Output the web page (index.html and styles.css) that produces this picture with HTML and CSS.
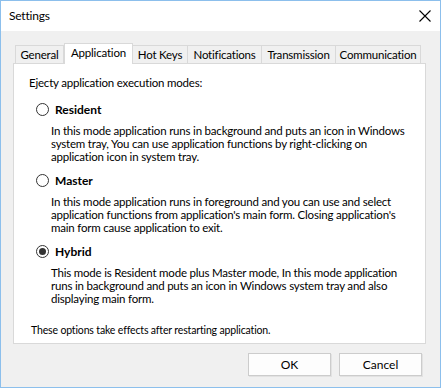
FILE: index.html
```html
<!DOCTYPE html>
<html lang="en">
  <head>
    <meta charset="UTF-8" />
    <meta name="viewport" content="width=device-width, initial-scale=1.0" />
    <title>Settings</title>
    <link rel="stylesheet" href="styles.css">
  </head>
  <body>
    <div class="window">
      <div class="titlebar">
        <span class="title">Settings</span>
        <svg class="close" width="12" height="12" viewBox="0 0 12 12">
          <path d="M0.5 0.5 L11.5 11.5 M11.5 0.5 L0.5 11.5" stroke="#000" stroke-width="1.1" fill="none" />
        </svg>
      </div>

      <div class="client">
        <div class="tabs">
          <div class="tab tab-general">General</div>
          <div class="tab tab-application active">Application</div>
          <div class="tab tab-hotkeys">Hot Keys</div>
          <div class="tab tab-notifications">Notifications</div>
          <div class="tab tab-transmission">Transmission</div>
          <div class="tab tab-communication">Communication</div>
        </div>

        <div class="panel">
          <p class="intro">Ejecty application execution modes:</p>

          <div class="option">
            <div class="radio-row">
              <span class="radio"></span>
              <span class="radio-label">Resident</span>
            </div>
            <p class="desc">
              In this mode application runs in background and puts an icon in Windows<br>
              system tray, You can use application functions by right-clicking on<br>
              application icon in system tray.
            </p>
          </div>

          <div class="option">
            <div class="radio-row">
              <span class="radio"></span>
              <span class="radio-label">Master</span>
            </div>
            <p class="desc">
              In this mode application runs in foreground and you can use and select<br>
              application functions from application's main form. Closing application's<br>
              main form cause application to exit.
            </p>
          </div>

          <div class="option">
            <div class="radio-row">
              <span class="radio checked"></span>
              <span class="radio-label">Hybrid</span>
            </div>
            <p class="desc">
              This mode is Resident mode plus Master mode, In this mode application<br>
              runs in background and puts an icon in Windows system tray and also<br>
              displaying main form.
            </p>
          </div>

          <p class="note">These options take effects after restarting application.</p>
        </div>

        <div class="buttons">
          <button class="btn">OK</button>
          <button class="btn">Cancel</button>
        </div>
      </div>
    </div>
  </body>
</html>
```

FILE: styles.css
```css
:root {
  --window-border: #8cbfec;
  --face: #f0f0f0;
  --line: #d9d9d9;
  --text: #000000;
  --ui: 11.5px;
}
body {
  margin: 0;
  font-family: Lato, "Liberation Sans", sans-serif;
  font-size: var(--ui);
  letter-spacing: -0.2px;
  color: var(--text);
}
.window {
  width: 441px;
  height: 388px;
  box-sizing: border-box;
  border: 1px solid var(--window-border);
  background-color: var(--face);
  display: flex;
  flex-direction: column;
}
.titlebar {
  height: 30px;
  background-color: #ffffff;
  display: flex;
  align-items: center;
  justify-content: space-between;
  padding: 0 9px 0 8px;
}
.title {
  font-size: 12px;
  line-height: 16px;
}
.close {
  display: block;
  margin-top: -1px;
}
.client {
  display: flex;
  flex-direction: column;
  padding: 12px 17px 0 12px;
}
.tabs {
  display: flex;
  align-items: flex-end;
  height: 20px;
  padding-left: 2px;
}
.tab {
  box-sizing: border-box;
  height: 18px;
  line-height: 17px;
  text-align: center;
  border: 1px solid var(--line);
  border-left: none;
  border-bottom: none;
  background-color: var(--face);
  white-space: nowrap;
}
.tab-general {
  width: 49px;
  border-left: 1px solid var(--line);
}
.tab-application {
  width: 69px;
}
.tab-hotkeys {
  width: 55px;
}
.tab-notifications {
  width: 74px;
}
.tab-transmission {
  width: 74px;
}
.tab-communication {
  width: 85px;
}
.tab.active {
  height: 21px;
  line-height: 17px;
  margin-bottom: -1px;
  background-color: #ffffff;
  border-left: 1px solid var(--line);
  position: relative;
  z-index: 1;
}
.panel {
  box-sizing: border-box;
  width: 413px;
  height: 281px;
  background-color: #ffffff;
  border: 1px solid var(--line);
  padding: 11px 0 0 15px;
  display: flex;
  flex-direction: column;
}
.intro {
  margin: 0 0 11px;
  line-height: 15px;
}
.option {
  margin-bottom: 9px;
  padding-left: 7px;
}
.radio-row {
  display: flex;
  align-items: center;
  gap: 6px;
  height: 16px;
}
.radio {
  box-sizing: border-box;
  width: 13px;
  height: 13px;
  border: 1px solid #333333;
  border-radius: 50%;
  background-color: #ffffff;
  display: grid;
  place-items: center;
}
.radio.checked::after {
  content: "";
  width: 7px;
  height: 7px;
  border-radius: 50%;
  background-color: #333333;
}
.radio-label {
  font-size: 12px;
  font-weight: bold;
  letter-spacing: 0;
}
.desc {
  margin: 7px 0 0 15px;
  line-height: 13px;
  white-space: nowrap;
}
.note {
  margin: 10px 0 0 2px;
  font-size: 10.5px;
  letter-spacing: -0.15px;
  line-height: 13px;
}
.buttons {
  display: flex;
  justify-content: flex-end;
  gap: 8px;
  margin-top: 9px;
  padding-right: 1px;
}
.btn {
  width: 83px;
  height: 23px;
  font-family: inherit;
  font-size: 12px;
  color: var(--text);
  background-color: #fdfdfd;
  border: 1px solid #cccccc;
  box-shadow: 1px 1px 0 #e2e2e2;
  padding: 0;
}
```
